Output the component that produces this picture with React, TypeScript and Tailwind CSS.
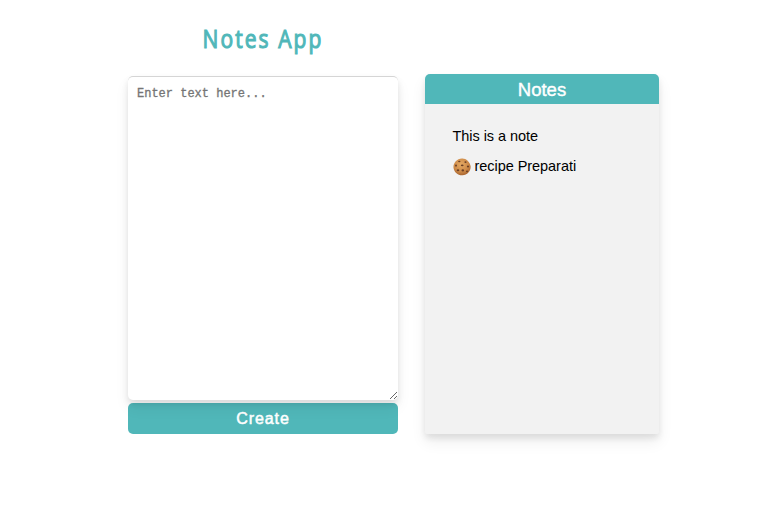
const notes = ["This is a note", "recipe Preparati"];

function Cookie() {
  return (
    <svg className="mr-1 h-[18px] w-[18px] shrink-0" viewBox="0 0 18 18" aria-hidden="true">
      <defs>
        <radialGradient id="dough" cx="45%" cy="35%" r="65%">
          <stop offset="0" stopColor="#e5aa64" />
          <stop offset="0.65" stopColor="#cd8a48" />
          <stop offset="1" stopColor="#a96530" />
        </radialGradient>
      </defs>
      <path d="M9 .6C13 .4 17 4 17.6 8.3C18 13 14 17.3 9.5 17.3C4.8 17.5.8 14 .5 9.5C.2 5 4 .7 9 .6Z" fill="url(#dough)" />
      <g fill="#6b4027">
        <ellipse cx="6.3" cy="3.5" rx="1.2" ry=".8" />
        <ellipse cx="12.5" cy="4.1" rx="1.1" ry=".9" />
        <ellipse cx="9.2" cy="7.3" rx="1.4" ry=".9" />
        <ellipse cx="3" cy="7.6" rx="1" ry="1.1" />
        <ellipse cx="15" cy="8.6" rx="1.1" ry="1" />
        <ellipse cx="5" cy="12.3" rx="1.3" ry="1" />
        <ellipse cx="9.8" cy="12.4" rx="1.3" ry="1.1" />
        <ellipse cx="14" cy="13.3" rx="1" ry=".9" />
      </g>
    </svg>
  );
}

export default function App() {
  return (
    <main className="flex h-[527px] w-[780px] items-start overflow-hidden bg-white pl-32 font-['Liberation_Sans',sans-serif]">
      <section className="flex w-[270px] flex-col">
        <h1 className="mt-[18px] h-[58px] origin-center scale-x-[0.826] text-center font-['Open_Sans',sans-serif] text-[25.5px] leading-[40px] font-medium tracking-[2.5px] whitespace-nowrap text-[#50b7b9] [-webkit-text-stroke:1.1px_#50b7b9] [stroke-linejoin:round]">
          Notes App
        </h1>
        <textarea
          placeholder="Enter text here..."
          className="relative z-10 block h-[324px] w-full resize rounded-[5px] border-t border-[#d5d5d5] bg-white px-[9px] pt-[9px] font-['Liberation_Mono',monospace] text-[12px] leading-[16px] shadow-[0_8px_15px_rgba(0,0,0,0.06),0_4px_6px_rgba(0,0,0,0.1)] outline-none placeholder:text-[#757575] placeholder:[-webkit-text-stroke:0.3px_#757575]"
        />
        <button className="mt-[3px] h-[31px] w-full rounded-[5px] bg-[#50b7b9] text-[16px] tracking-[0.9px] text-white [-webkit-text-stroke:0.5px_white]">
          Create
        </button>
      </section>
      <aside className="mt-[74px] ml-[27px] h-[360px] w-[234px] rounded-t-[5px] rounded-b-[2px] bg-[#f2f2f2] shadow-[0_8px_15px_rgba(0,0,0,0.07),0_4px_6px_rgba(0,0,0,0.09)]">
        <h2 className="h-[30px] rounded-t-[5px] bg-[#50b7b9] text-center text-[18.5px] leading-[32px] text-white [-webkit-text-stroke:0.4px_white]">
          Notes
        </h2>
        <ul className="pt-[18px] pl-[27.5px] text-[14.5px] tracking-[-0.05px] text-black">
          {notes.map((note, i) => (
            <li key={note} className="flex h-[30px] items-center">
              {i === 1 && <Cookie />}
              {note}
            </li>
          ))}
        </ul>
      </aside>
    </main>
  );
}
